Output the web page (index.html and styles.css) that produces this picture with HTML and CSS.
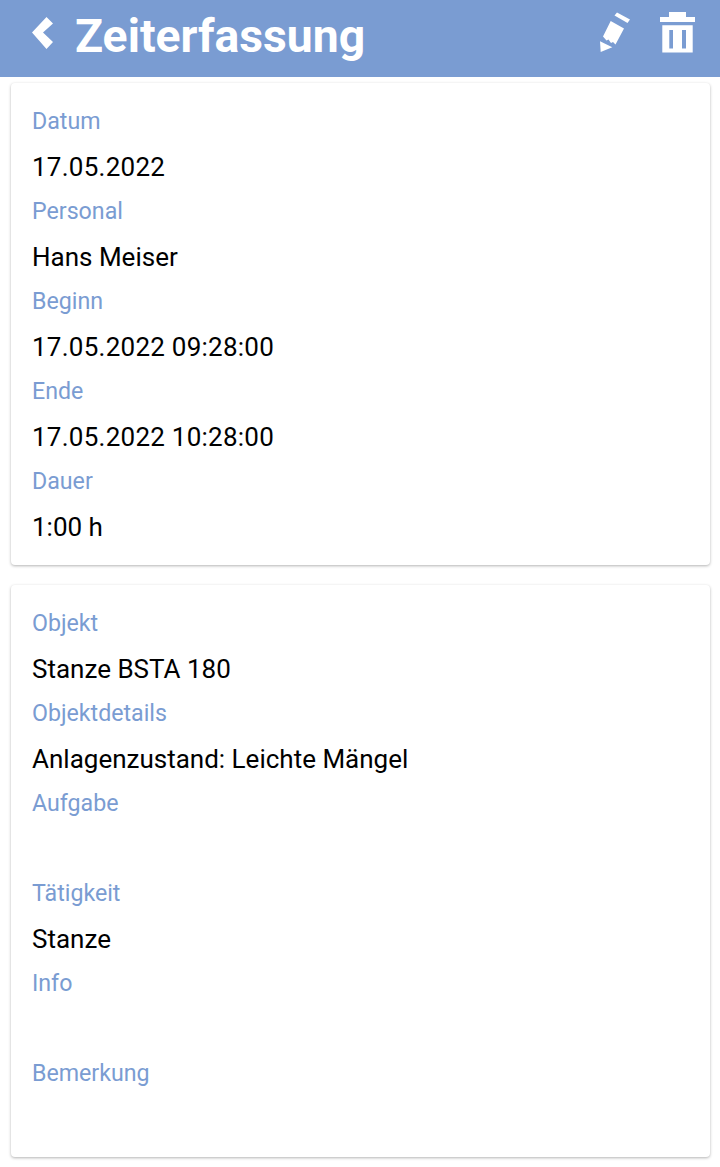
FILE: index.html
```html
<!DOCTYPE html>
<html>
<head>
    <title>Zeiterfassung</title>
    <link rel="stylesheet" href="styles.css">
</head>
<body>
    <div class="header">
        <svg class="back-icon" width="26" height="36" viewBox="0 0 26 36">
            <path d="M2 17.5 L16.5 2 L23 8.5 L13 17.5 L23 27 L16.5 34 Z" fill="#fff"/>
        </svg>
        <div class="header-title">Zeiterfassung</div>
        <svg class="edit-icon" width="31" height="41" viewBox="0 0 31 41">
            <path d="M14.5 3.5 L17 0.5 L30 7.5 L27.5 11 Z" fill="#fff"/>
            <path d="M10.7 9 L24 16.5 L15.5 32.5 L13 30 L11 31 L8.5 27.5 L6.5 28.5 L3 24.5 Z" fill="#fff"/>
            <path d="M0 29.3 L12.3 35.3 L0.7 40 Z" fill="#fff"/>
        </svg>
        <svg class="trash-icon" width="35" height="41" viewBox="0 0 35 41">
            <path d="M9 0 H26 V5 H35 V10 H0 V5 H9 Z" fill="#fff"/>
            <path fill-rule="evenodd" d="M2.3 13.3 H32.7 V40.5 H2.3 Z M9.3 18 V36.5 H13 V18 Z M22 18 V36.5 H26 V18 Z" fill="#fff"/>
        </svg>
    </div>

    <div class="card">
        <div class="label">Datum</div>
        <div class="value value-num">17.05.2022</div>
        <div class="label">Personal</div>
        <div class="value">Hans Meiser</div>
        <div class="label">Beginn</div>
        <div class="value value-num">17.05.2022 09:28:00</div>
        <div class="label">Ende</div>
        <div class="value value-num">17.05.2022 10:28:00</div>
        <div class="label">Dauer</div>
        <div class="value">1:00 h</div>
    </div>

    <div class="card">
        <div class="label">Objekt</div>
        <div class="value">Stanze BSTA 180</div>
        <div class="label">Objektdetails</div>
        <div class="value">Anlagenzustand: Leichte Mängel</div>
        <div class="label">Aufgabe</div>
        <div class="value"></div>
        <div class="label">Tätigkeit</div>
        <div class="value">Stanze</div>
        <div class="label">Info</div>
        <div class="value"></div>
        <div class="label">Bemerkung</div>
        <div class="value"></div>
    </div>
</body>
</html>
```

FILE: styles.css
```css
body {
    margin: 0;
    background-color: #FFFFFF;
    font-family: Roboto, "Liberation Sans", sans-serif;
    overflow: hidden;
}

.header {
    display: flex;
    align-items: center;
    height: 77px;
    padding: 0 25px 8px 30px;
    box-sizing: border-box;
    background-color: #7A9CD2;
    color: #FFFFFF;
}

.header-title {
    flex: 1;
    margin: 3px 0 0 19px;
    font-size: 46.3px;
    font-weight: 700;
    line-height: 69px;
}

.back-icon {
    flex: none;
    margin-bottom: 3px;
}

.edit-icon {
    flex: none;
    margin: 0 29px 5px 0;
}

.trash-icon {
    flex: none;
    margin-bottom: 5px;
}

.card {
    margin: 6px 10px 20px 11px;
    padding: 16px 21px 16px 21px;
    background-color: #FFFFFF;
    border-radius: 4px;
    box-shadow: 0 1px 3px rgba(0, 0, 0, 0.3);
}

.label {
    height: 45px;
    font-size: 23.2px;
    line-height: 45px;
    color: #7A9CD2;
}

.value {
    height: 45px;
    font-size: 26px;
    line-height: 47px;
    color: #000000;
}

.value-num {
    letter-spacing: 0.25px;
}
```
